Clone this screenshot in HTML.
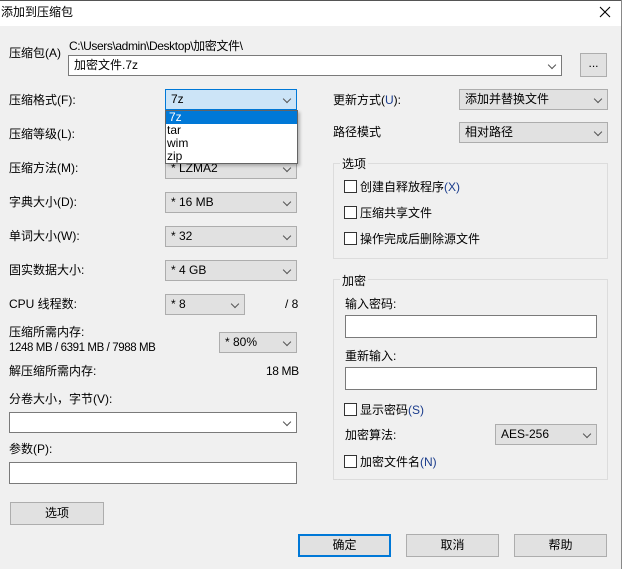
<!DOCTYPE html>
<html><head><meta charset="utf-8"><style>
*{box-sizing:border-box;margin:0;padding:0}
body{width:622px;height:569px;background:#f0f0f0;font-family:"Liberation Sans","Noto Sans CJK SC",sans-serif;font-size:12px;color:#000;position:relative;overflow:hidden}
.a{position:absolute;white-space:nowrap;line-height:14px}
.n{letter-spacing:-0.4px}
.cb{position:absolute;height:21px;background:#e1e1e1;border:1px solid #adadad;padding-left:5px;line-height:19px}
.cb::after{content:"";position:absolute;right:6px;top:6px;width:5px;height:5px;border-right:1px solid #555;border-bottom:1px solid #555;transform:rotate(45deg)}
.w{background:#fff;border:1px solid #7a7a7a}
.in{position:absolute;background:#fff;border:1px solid #7a7a7a}
.btn{position:absolute;height:23px;background:#e1e1e1;border:1px solid #adadad;text-align:center;line-height:21px}
.grp{position:absolute;border:1px solid #dcdcdc}
.lg{position:absolute;background:#f0f0f0;padding:0 2px;line-height:14px}
.ck{position:absolute;line-height:14px;padding-left:16px}
.ck::before{content:"";position:absolute;left:0;top:0;width:13px;height:13px;border:1px solid #333;background:#fff;box-sizing:border-box}
.u{color:#1a3c8c}
</style></head><body>
<div style="position:absolute;left:0;top:0;width:622px;height:26px;background:#fff;border-top:1px solid #555"></div>
<div class="a" style="left:1px;top:5px">添加到压缩包</div>
<svg style="position:absolute;left:599px;top:6px" width="12" height="12"><path d="M1 1L11 11M11 1L1 11" stroke="#000" stroke-width="1.1"/></svg>
<div style="position:absolute;left:621px;top:0;width:1px;height:569px;background:#888"></div>

<div class="a" style="left:9px;top:46px">压缩包(A)</div>
<div class="a n" style="left:69px;top:39px">C:\Users\admin\Desktop\加密文件\</div>
<div class="cb w" style="left:68px;top:55px;width:494px;height:21px">加密文件.7z</div>
<div class="btn" style="left:580px;top:53px;width:27px;height:24px;line-height:18px">...</div>

<div class="a" style="left:9px;top:93px">压缩格式(F):</div>
<div class="cb" style="left:165px;top:89px;width:132px;background:#cce4f7;border-color:#0078d7">7z</div>
<div class="a" style="left:9px;top:127px">压缩等级(L):</div>
<div class="a" style="left:9px;top:161px">压缩方法(M):</div>
<div class="cb" style="left:165px;top:158px;width:132px">* LZMA2</div>
<div class="a" style="left:9px;top:195px">字典大小(D):</div>
<div class="cb" style="left:165px;top:192px;width:132px">* 16 MB</div>
<div class="a" style="left:9px;top:229px">单词大小(W):</div>
<div class="cb" style="left:165px;top:226px;width:132px">* 32</div>
<div class="a" style="left:9px;top:263px">固实数据大小:</div>
<div class="cb" style="left:165px;top:260px;width:132px">* 4 GB</div>
<div class="a" style="left:9px;top:297px">CPU 线程数:</div>
<div class="cb" style="left:165px;top:294px;width:80px">* 8</div>
<div class="a" style="left:285px;top:297px">/ 8</div>
<div class="a" style="left:9px;top:325px">压缩所需内存:</div>
<div class="a n" style="left:9px;top:341px;font-size:11.5px">1248 MB / 6391 MB / 7988 MB</div>
<div class="cb" style="left:219px;top:332px;width:78px">* 80%</div>
<div class="a" style="left:9px;top:364px">解压缩所需内存:</div>
<div class="a n" style="left:266px;top:364px">18 MB</div>
<div class="a" style="left:9px;top:392px">分卷大小，字节(V):</div>
<div class="cb w" style="left:9px;top:412px;width:288px">&nbsp;</div>
<div class="a" style="left:9px;top:442px">参数(P):</div>
<div class="in" style="left:9px;top:462px;width:288px;height:22px"></div>
<div class="btn" style="left:10px;top:502px;width:94px">选项</div>

<div style="position:absolute;left:165px;top:110px;width:133px;height:54px;background:#fff;border:1px solid #646464;box-shadow:2px 2px 3px rgba(0,0,0,.25)">
<div style="height:13px;background:#0078d7;color:#fff;line-height:13px;padding-left:3px">7z</div>
<div style="height:13px;line-height:13px;padding-left:1px">tar</div>
<div style="height:13px;line-height:13px;padding-left:1px">wim</div>
<div style="height:13px;line-height:13px;padding-left:1px">zip</div>
</div>

<div class="a" style="left:333px;top:93px">更新方式(<span class="u">U</span>):</div>
<div class="cb" style="left:459px;top:89px;width:149px">添加并替换文件</div>
<div class="a" style="left:333px;top:125px">路径模式</div>
<div class="cb" style="left:459px;top:122px;width:149px">相对路径</div>

<div class="grp" style="left:333px;top:163px;width:275px;height:96px"></div>
<div class="lg" style="left:340px;top:157px">选项</div>
<div class="ck" style="left:344px;top:180px">创建自释放程序<span class="u">(X)</span></div>
<div class="ck" style="left:344px;top:206px">压缩共享文件</div>
<div class="ck" style="left:344px;top:232px">操作完成后删除源文件</div>

<div class="grp" style="left:333px;top:279px;width:275px;height:201px"></div>
<div class="lg" style="left:340px;top:274px">加密</div>
<div class="a" style="left:345px;top:297px">输入密码:</div>
<div class="in" style="left:345px;top:315px;width:252px;height:23px"></div>
<div class="a" style="left:345px;top:349px">重新输入:</div>
<div class="in" style="left:345px;top:367px;width:252px;height:23px"></div>
<div class="ck" style="left:344px;top:403px">显示密码<span class="u">(S)</span></div>
<div class="a" style="left:345px;top:428px">加密算法:</div>
<div class="cb" style="left:495px;top:424px;width:102px">AES-256</div>
<div class="ck" style="left:344px;top:455px">加密文件名<span class="u">(N)</span></div>

<div class="btn" style="left:298px;top:534px;width:93px;border:2px solid #0078d7;line-height:19px">确定</div>
<div class="btn" style="left:406px;top:534px;width:93px">取消</div>
<div class="btn" style="left:514px;top:534px;width:93px">帮助</div>
</body></html>
